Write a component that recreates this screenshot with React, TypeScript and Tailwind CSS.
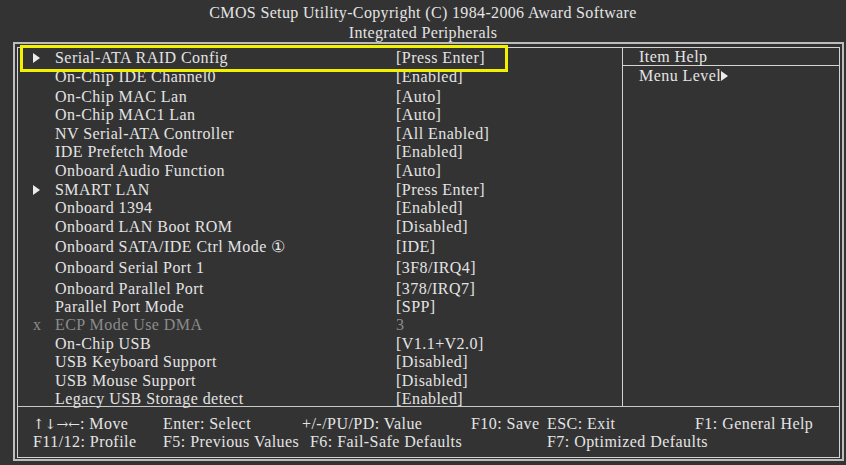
const rows = [
  { label: "Serial-ATA RAID Config", value: "[Press Enter]", mark: "arrow", h: "h-[19px]" },
  { label: "On-Chip IDE Channel0", value: "[Enabled]", h: "h-[20px]" },
  { label: "On-Chip MAC Lan", value: "[Auto]", h: "h-[19px]" },
  { label: "On-Chip MAC1 Lan", value: "[Auto]", h: "h-[18px]" },
  { label: "NV Serial-ATA Controller", value: "[All Enabled]", h: "h-[19px]" },
  { label: "IDE Prefetch Mode", value: "[Enabled]", h: "h-[18px]" },
  { label: "Onboard Audio Function", value: "[Auto]", h: "h-[19px]" },
  { label: "SMART LAN", value: "[Press Enter]", mark: "arrow", h: "h-[19px]" },
  { label: "Onboard 1394", value: "[Enabled]", h: "h-[18px]" },
  { label: "Onboard LAN Boot ROM", value: "[Disabled]", h: "h-[19px]" },
  { label: "Onboard SATA/IDE Ctrl Mode \u2460", value: "[IDE]", h: "h-[21px]" },
  { label: "Onboard Serial Port 1", value: "[3F8/IRQ4]", h: "h-[22px]" },
  { label: "Onboard Parallel Port", value: "[378/IRQ7]", h: "h-[19px]" },
  { label: "Parallel Port Mode", value: "[SPP]", h: "h-[18px]" },
  { label: "ECP Mode Use DMA", value: "3", mark: "x", h: "h-[18px]" },
  { label: "On-Chip USB", value: "[V1.1+V2.0]", h: "h-[19px]" },
  { label: "USB Keyboard Support", value: "[Disabled]", h: "h-[18px]" },
  { label: "USB Mouse Support", value: "[Disabled]", h: "h-[19px]" },
  { label: "Legacy USB Storage detect", value: "[Enabled]", h: "h-[17px]" },
];

function Tri() {
  return (
    <svg width="7" height="10" viewBox="0 0 7 10" className="inline-block shrink-0">
      <polygon points="0,0 7,5 0,10" fill="#ececec" />
    </svg>
  );
}

export default function App() {
  return (
    <div
      className="w-[846px] h-[465px] bg-[#333333] text-[#e4e4e4] text-[16px] tracking-[0.45px] overflow-hidden"
      style={{ fontFamily: '"Liberation Serif", "Times New Roman", serif' }}
    >
      <div className="h-[42px] pt-[3px] text-center leading-[20px] tracking-[0.35px]">
        <div>CMOS Setup Utility-Copyright (C) 1984-2006 Award Software</div>
        <div>Integrated Peripherals</div>
      </div>

      <div className="ml-[13px] w-[831px] h-[419px] border-2 border-[#bdbdbd] px-[2px] pt-[3px] pb-[1px]">
        <div className="relative h-full border border-[#d4d4d4] flex flex-col">
          <div className="flex h-[359px] border-b border-[#c8c8c8]">
            <div className="w-[605px] border-r border-[#d4d4d4]">
              {rows.map((r) => (
                <div
                  key={r.label}
                  className={`flex items-center ${r.h} leading-none ${r.mark === "x" ? "text-[#8c8c8c]" : ""}`}
                >
                  <span className="w-[37px] shrink-0 pl-[15px] flex items-center">
                    {r.mark === "arrow" ? <Tri /> : r.mark === "x" ? "x" : null}
                  </span>
                  <span className="w-[341px] shrink-0 whitespace-nowrap">{r.label}</span>
                  <span className="whitespace-nowrap">{r.value}</span>
                </div>
              ))}
            </div>
            <div className="flex-1">
              <div className="h-[18px] border-b border-[#d4d4d4] pl-[16px] flex items-center leading-none">
                Item Help
              </div>
              <div className="h-[20px] pl-[16px] flex items-center leading-none">
                Menu Level
                <Tri />
              </div>
            </div>
          </div>

          <div className="flex-1 pt-[8px] leading-[18px] whitespace-nowrap">
            <div className="flex">
              <span className="w-[145px] shrink-0 pl-[15px]">
                <span style={{ fontFamily: '"DejaVu Serif", serif' }} className="text-[14px] tracking-normal">↑↓→←</span>: Move
              </span>
              <span className="w-[139px] shrink-0">Enter: Select</span>
              <span className="w-[169px] shrink-0">+/-/PU/PD: Value</span>
              <span className="w-[76px] shrink-0">F10: Save</span>
              <span className="w-[148px] shrink-0">ESC: Exit</span>
              <span>F1: General Help</span>
            </div>
            <div className="flex">
              <span className="w-[145px] shrink-0 pl-[15px]">F11/12: Profile</span>
              <span className="w-[147px] shrink-0">F5: Previous Values</span>
              <span className="w-[237px] shrink-0">F6: Fail-Safe Defaults</span>
              <span>F7: Optimized Defaults</span>
            </div>
          </div>

          <div className="absolute left-[2px] top-[-3px] w-[488px] h-[27px] border-[3px] border-[#f2f200]" />
        </div>
      </div>
    </div>
  );
}
